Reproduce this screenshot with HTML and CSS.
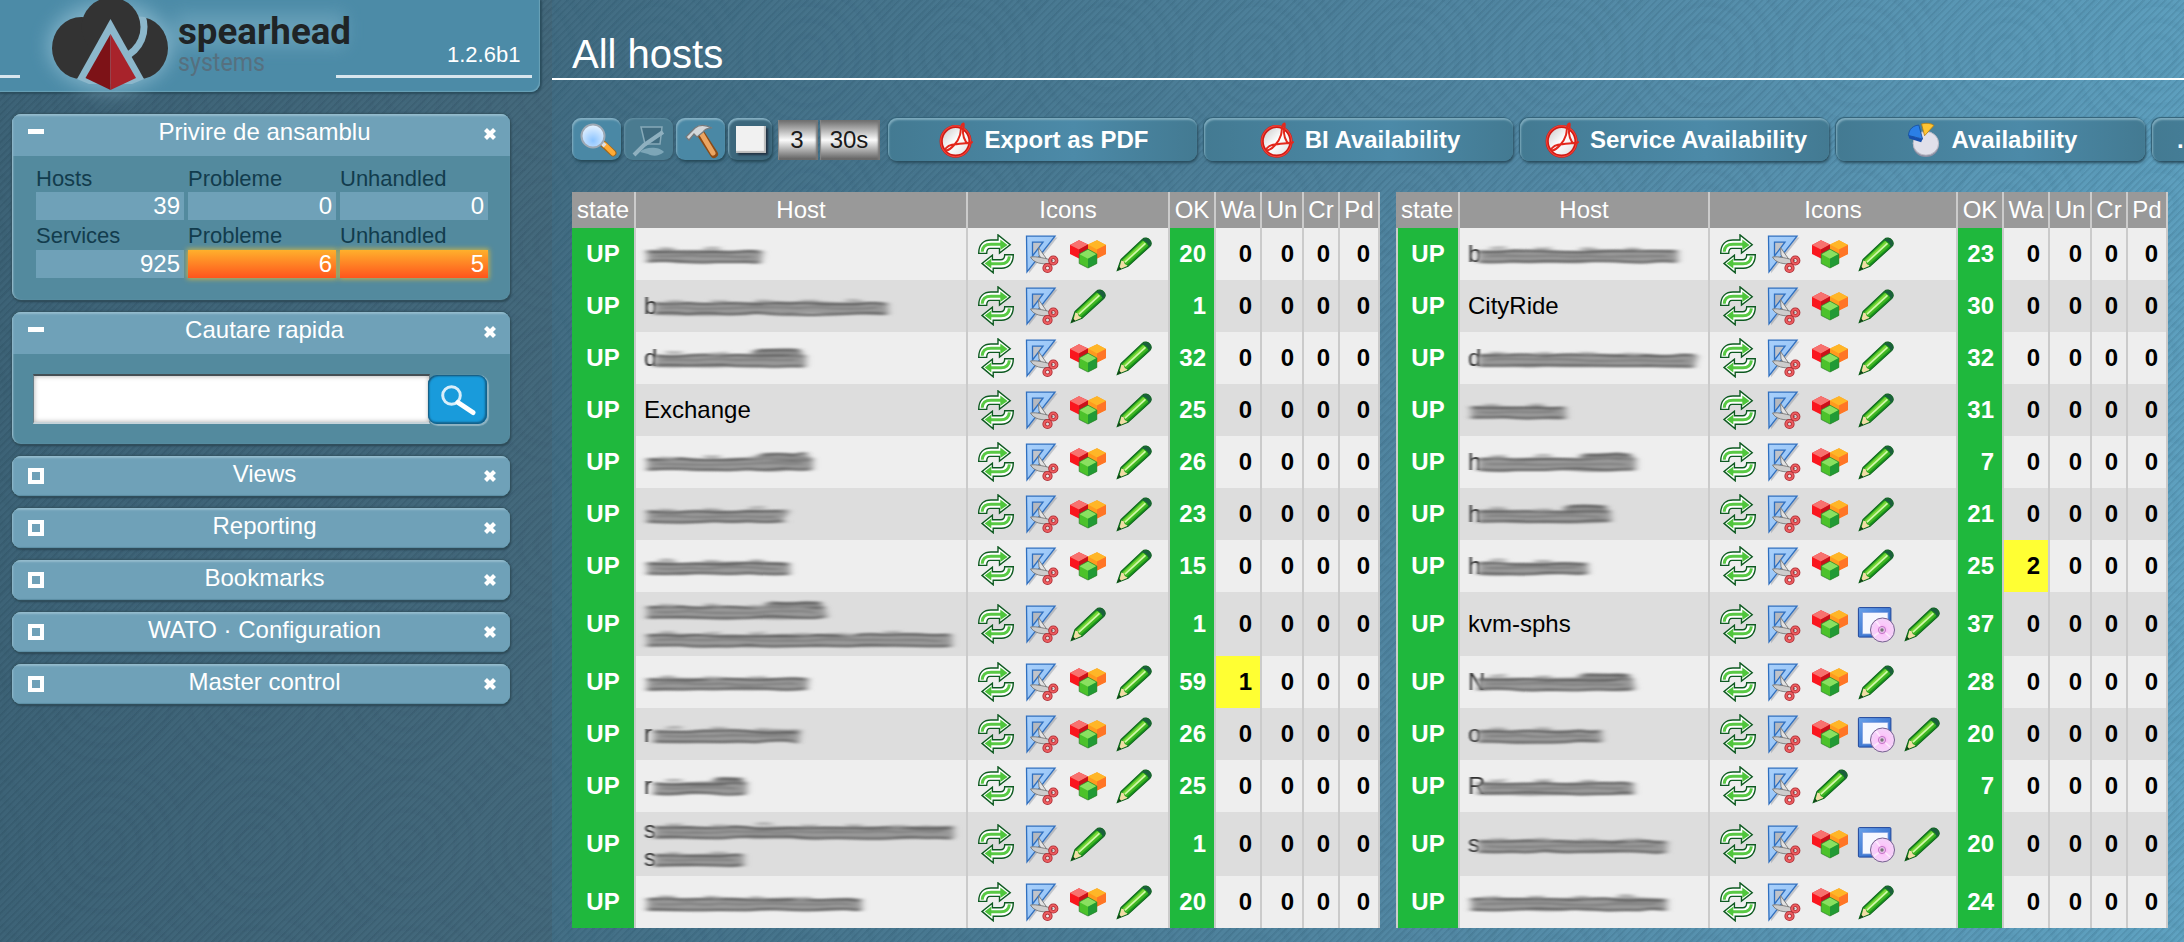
FILE: index.html
```html
<!DOCTYPE html>
<html lang="ro">
<head>
<meta charset="utf-8">
<title>All hosts</title>
<link rel="stylesheet" href="styles.css">
</head>
<body>
<svg class="defs" width="0" height="0" aria-hidden="true">
  <defs>
    <linearGradient id="gBlue" x1="0" y1="0" x2="1" y2="1"><stop offset="0" stop-color="#a9d0fb"/><stop offset=".5" stop-color="#9cc8f8"/><stop offset="1" stop-color="#e8f3ff"/></linearGradient>
    <linearGradient id="gWin" x1="0" y1="0" x2="1" y2="1"><stop offset="0" stop-color="#6aa2ea"/><stop offset="1" stop-color="#1f5ac0"/></linearGradient>
    <radialGradient id="gDisc"><stop offset="0" stop-color="#f6a8f2"/><stop offset=".5" stop-color="#fbc8fa"/><stop offset="1" stop-color="#f3d3f8"/></radialGradient>
    <radialGradient id="gLens" cx=".5" cy=".7" r=".7"><stop offset="0" stop-color="#8cc4ff"/><stop offset="1" stop-color="#e9f4ff"/></radialGradient>
    <linearGradient id="gPdf" x1="0" y1="0" x2="1" y2="1"><stop offset="0" stop-color="#c4c4c4"/><stop offset=".5" stop-color="#fff"/><stop offset="1" stop-color="#ddd"/></linearGradient>
    <filter id="halo" x="-40%" y="-40%" width="180%" height="180%"><feGaussianBlur stdDeviation="9"/></filter>
    <filter id="smear" x="-10%" y="-60%" width="120%" height="220%"><feGaussianBlur stdDeviation="3.6 .9"/></filter>
    <filter id="soft" x="-20%" y="-20%" width="140%" height="140%"><feGaussianBlur stdDeviation="1.1 .5"/></filter>
    <clipPath id="rightLobe"><ellipse cx="139" cy="48" rx="29.500" ry="31.500"/></clipPath>
  </defs>
  <symbol id="i-refresh" viewBox="0 0 40 40">
    <g stroke="#0d5a20" stroke-width="1.4" stroke-linejoin="miter" fill="#fff">
      <path d="M2.7 19.4 C2.7 10 8 6 15 6 H22 V.9 L34.2 10.8 L23.5 19 V14.4 H14 C11.5 14.4 10.7 16.5 10.7 19.4 Z"/>
      <path d="M37.3 20.7 C37.3 30 32 34.2 25.5 34.2 H17.2 V38.8 L6 29.4 L16.4 21.2 V25.8 H24.5 C27.5 25.8 28.7 24 28.7 20.7 Z"/>
    </g>
    <g fill="none" stroke="#58c944" stroke-width="3"><path d="M6.2 17.8 C6.5 11.5 10 10.3 15 10.3 H27"/><path d="M33.4 22.4 C32.8 28 30 29.8 25 29.8 H13"/></g>
    <g fill="#4fc63c"><path d="M24.3 5.5 31.6 10.9 24.3 16Z"/><path d="M15.3 24.6 8.6 29.5 15.3 34.6Z"/></g>
  </symbol>
  <symbol id="i-tools" viewBox="0 0 40 40">
    <path d="M4.9 2.6H34L5.6 38.4Z" fill="#6d7686" opacity=".35" transform="translate(1.5 .8)"/>
    <path fill-rule="evenodd" d="M4.5 2.2H33L5 37.8Z M10.5 8.2V22L21 8.2Z" fill="url(#gBlue)" stroke="#2f6fbf" stroke-width="1.3"/>
    <path d="M16.500 13.500 27.500 29 24 31.500 17 21Z" fill="#e2e2e2" stroke="#777" stroke-width=".9"/>
    <path d="M8.500 23 C14 22 24 24.500 31 26.500 L27.500 30 C20 30 12 29.500 8.500 23Z" fill="#cdcdcd" stroke="#777" stroke-width=".9"/>
    <g fill="none" stroke="#a92930" stroke-width="3.6"><circle cx="31.300" cy="26.500" r="3.300"/><circle cx="25.500" cy="34" r="3.300"/></g>
    <g fill="none" stroke="#ec5d60" stroke-width="2"><circle cx="31.300" cy="26.500" r="3.300"/><circle cx="25.500" cy="34" r="3.300"/></g>
  </symbol>
  <symbol id="i-cubes" viewBox="0 0 40 40">
    <path d="M2 11 11 6.2 20 10.5 20 20 11 24.5 2 20Z" fill="#fa161e"/><path d="M2 11 11 6.2 20 10.5 11 15.5Z" fill="#f7726f"/><path d="M11 15.5 20 10.5V20L11 24.5Z" fill="#c9121a"/>
    <path d="M20 10.5 29 6.2 38 11V20L29 24.5 20 20Z" fill="#ff9a1e"/><path d="M20 10.5 29 6.2 38 11 29 15.5Z" fill="#ffb627"/><path d="M29 15.5 38 11V20L29 24.5Z" fill="#ff7526"/>
    <path d="M11.2 20 20 15.2 28.8 20V29.5L20 34 11.2 29.5Z" fill="#4cc22b"/><path d="M11.2 20 20 15.2 28.8 20 20 24.7Z" fill="#8ae060"/><path d="M20 24.7 28.8 20V29.5L20 34Z" fill="#219a35"/>
    <path d="M11.2 20 20 15.2 28.8 20V29.5L20 34 11.2 29.5Z" fill="none" stroke="#2a7f2a" stroke-width=".7"/>
  </symbol>
  <symbol id="i-pencil" viewBox="0 0 40 40">
    <path d="M3.200 36.600 7 25.500 28.600 5.200C30.500 3.200 34 4 36 6.400 37.600 8.400 37.600 10.500 35.900 12.300L14 32.300Z" fill="#17961a" stroke="#0d641a" stroke-width="1.1"/>
    <path d="M8.200 25.800 28.800 6.600 34.200 11.400 12.600 30.800Z" fill="#3fb524"/>
    <path d="M9 26.400 29.500 7.300 32.400 9.800 11.200 29Z" fill="#7bd838"/>
    <path d="M11 28.200 31.400 9.300" stroke="#d0f7ac" stroke-width="1.600" fill="none"/>
    <path d="M7.400 26.400 9.700 27.200 10.800 30 13.400 31.400 13.200 32.100 5 35.600Z" fill="#f1dda6"/>
    <path d="M3.600 36.400 5 32.400 7.400 34.700Z" fill="#123d18"/>
    <path d="M29.500 4.800C31.500 3.600 34.200 4.400 36 6.600 37.400 8.600 37.400 10.700 35.900 12.300L34.600 13.400C35 10.600 31.800 7 28 6.300Z" fill="#1b5f3d"/>
  </symbol>
  <symbol id="i-disc" viewBox="0 0 40 40">
    <rect x="2.4" y="3.6" width="32.5" height="29.5" rx="1" fill="url(#gWin)" stroke="#20469a" stroke-width="1"/>
    <rect x="6.4" y="8.4" width="25.6" height="21.6" fill="#f6f8ff" stroke="#7d9fe0" stroke-width=".8"/>
    <circle cx="26.5" cy="26" r="12" fill="url(#gDisc)" stroke="#75608f" stroke-width="1"/>
    <path d="M26.5 26 20 17M26.5 26 34 33M26.5 26 18 32" stroke="#fff" stroke-width="1.6" opacity=".6"/>
    <circle cx="26" cy="26" r="3.6" fill="#e9c0ec" stroke="#c26ac4" stroke-width=".9"/><circle cx="26" cy="26" r="1.7" fill="#777"/>
  </symbol>
  <symbol id="i-pdf" viewBox="0 0 34 36">
    <ellipse cx="16.600" cy="19.300" rx="14.400" ry="14.800" fill="url(#gPdf)" stroke="#d01a14" stroke-width="3.200"/>
    <ellipse cx="16.600" cy="19.300" rx="14.900" ry="15.400" fill="none" stroke="#f2443a" stroke-width="1.100"/>
    <path d="M24.500 1.500C21 1.500 22.500 8 21 13C19 20 12 27.500 7.500 28.500C4.500 28 8 24 13 22.800C19 21.500 26 21.500 32.500 20.500C28 24.500 24.500 17 24 11C23.700 7 25.500 2 24.500 1.500Z" fill="none" stroke="#e3281c" stroke-width="2"/>
  </symbol>
  <symbol id="i-pie" viewBox="0 0 36 38">
    <ellipse cx="20" cy="25" rx="13.500" ry="12" fill="#8f90a4"/>
    <ellipse cx="20" cy="22.500" rx="13.500" ry="12.500" fill="#e0e0ea" stroke="#b7b8c4"/>
    <path d="M16.500 18 1.500 14.200C2 7 7 3.600 12.500 3.200Z" fill="#2b7fe6" stroke="#164f9f" stroke-width=".9"/><path d="M1.500 14.200 16.500 18 15 21.500 2.400 17.400Z" fill="#164fae"/>
    <path d="M18.600 14.500 15.400 2C20 .8 25.500 1 28.500 3.600Z" fill="#ffc533" stroke="#b87f10" stroke-width=".9"/>
  </symbol>
</svg>

<aside class="sidebar">
  <header class="brand">
    <span class="rule rule-left"></span>
    <svg class="logo" width="320" height="100" viewBox="40 0 320 100">
      <g filter="url(#halo)" fill="#8fbdd2" opacity=".75"><ellipse cx="110" cy="46" rx="62" ry="44"/><rect x="175" y="14" width="170" height="32" opacity=".55"/></g>
      <ellipse cx="139" cy="48" rx="29" ry="31" fill="#333"/>
      <circle cx="111" cy="27" r="36.500" fill="#8cb7cb" clip-path="url(#rightLobe)"/>
      <ellipse cx="81.500" cy="48" rx="29.500" ry="31" fill="#333"/>
      <circle cx="111" cy="27" r="29.500" fill="#333"/>
      <path d="M90 36h36v16l-6 6H90z" fill="#333"/>
      <path d="M110.500 19 144 79 132 84 89 84 77 79Z" fill="#8cb7cb"/>
      <path d="M110.500 34 85.500 78 110.500 90Z" fill="#7d1217"/><path d="M110.500 34 136 78 110.500 90Z" fill="#a8232b"/>
      <text class="logo-main" x="178" y="44" textLength="173" lengthAdjust="spacingAndGlyphs">spearhead</text>
      <text class="logo-sub" x="178" y="70.500" textLength="87" lengthAdjust="spacingAndGlyphs">systems</text>
    </svg>
    <span class="version">1.2.6b1</span>
    <span class="rule rule-right"></span>
  </header>

  <section class="snapin">
    <h2 class="snapin-head"><i class="fold open"></i><span>Privire de ansamblu</span><svg class="close" viewBox="0 0 14 14"><path d="M2.500 2.500 11.500 11.500M11.500 2.500 2.500 11.500"/></svg></h2>
    <div class="snapin-body overview">
      <span class="lbl">Hosts</span><span class="lbl">Probleme</span><span class="lbl">Unhandled</span>
      <b class="val">39</b><b class="val">0</b><b class="val">0</b>
      <span class="lbl second">Services</span><span class="lbl second">Probleme</span><span class="lbl second">Unhandled</span>
      <b class="val">925</b><b class="val hot">6</b><b class="val hot">5</b>
    </div>
  </section>
  <section class="snapin">
    <h2 class="snapin-head"><i class="fold open"></i><span>Cautare rapida</span><svg class="close" viewBox="0 0 14 14"><path d="M2.500 2.500 11.500 11.500M11.500 2.500 2.500 11.500"/></svg></h2>
    <div class="snapin-body search">
      <div class="search-input"></div>
      <div class="search-btn"><svg width="36" height="32" viewBox="0 0 36 32"><circle cx="11.500" cy="10.500" r="8.800" fill="none" stroke="#d9eefa" stroke-width="3"/><path d="M18 17.500 33 27.500" stroke="#fff" stroke-width="5" stroke-linecap="round"/></svg></div>
    </div>
  </section>
  <section class="snapin closed"><h2 class="snapin-head"><i class="fold"></i><span>Views</span><svg class="close" viewBox="0 0 14 14"><path d="M2.500 2.500 11.500 11.500M11.500 2.500 2.500 11.500"/></svg></h2></section>
  <section class="snapin closed"><h2 class="snapin-head"><i class="fold"></i><span>Reporting</span><svg class="close" viewBox="0 0 14 14"><path d="M2.500 2.500 11.500 11.500M11.500 2.500 2.500 11.500"/></svg></h2></section>
  <section class="snapin closed"><h2 class="snapin-head"><i class="fold"></i><span>Bookmarks</span><svg class="close" viewBox="0 0 14 14"><path d="M2.500 2.500 11.500 11.500M11.500 2.500 2.500 11.500"/></svg></h2></section>
  <section class="snapin closed"><h2 class="snapin-head"><i class="fold"></i><span>WATO · Configuration</span><svg class="close" viewBox="0 0 14 14"><path d="M2.500 2.500 11.500 11.500M11.500 2.500 2.500 11.500"/></svg></h2></section>
  <section class="snapin closed"><h2 class="snapin-head"><i class="fold"></i><span>Master control</span><svg class="close" viewBox="0 0 14 14"><path d="M2.500 2.500 11.500 11.500M11.500 2.500 2.500 11.500"/></svg></h2></section>
</aside>

<main class="main">
  <h1 class="title">All hosts</h1>
  <nav class="toolbar">
    <span class="tool"><svg width="50" height="42" viewBox="0 0 50 42"><path d="M30 25 41 35" stroke="#a3671a" stroke-width="7" stroke-linecap="round"/><path d="M33 27 41 35" stroke="#ffab35" stroke-width="5" stroke-linecap="round"/><path d="M28 23 33 28" stroke="#e0e0e0" stroke-width="4"/><circle cx="21" cy="18" r="11.500" fill="url(#gLens)" stroke="#9ea9b5" stroke-width="2"/></svg></span>
    <span class="tool dim"><svg width="50" height="42" viewBox="0 0 50 42"><path d="M17 9H38L36 26H21Z" fill="#416c80" stroke="#86a9b8" stroke-width="1.500"/><path d="M10 37 20 27 39 14" fill="none" stroke="#8fb0bf" stroke-width="4"/><path d="M16 34C22 28 36 29 40 34C34 39 28 38 24 36Z" fill="#7da6b7"/></svg></span>
    <span class="tool"><svg width="50" height="42" viewBox="0 0 50 42"><path d="M25 16 38 36" stroke="#8c4b16" stroke-width="8" stroke-linecap="round"/><path d="M25 15 37 35" stroke="#eba562" stroke-width="5" stroke-linecap="round"/><path d="M10 19 19 10C24 6 30 7 36 10C31 10 28 12 27 14L21 19 18 16 13 22Z" fill="#d4d7d9" stroke="#77797b" stroke-width="1.200"/></svg></span>
    <span class="tool check"><i></i></span>
    <span class="cell three">3</span><span class="cell secs">30s</span>
    <span class="btn"><svg width="34" height="36"><use href="#i-pdf"/></svg>Export as PDF</span>
    <span class="btn"><svg width="34" height="36"><use href="#i-pdf"/></svg>BI Availability</span>
    <span class="btn"><svg width="34" height="36"><use href="#i-pdf"/></svg>Service Availability</span>
    <span class="btn"><svg width="34" height="36"><use href="#i-pie"/></svg>Availability</span>
    <span class="btn more">...</span>
  </nav>
  <table class="hosts">
    <colgroup><col class="c-state"><col class="c-host"><col class="c-icons"><col class="c-n46"><col class="c-n46"><col class="c-n42"><col class="c-n36"><col class="c-n40"><col class="c-gap"><col class="c-state"><col class="c-host2"><col class="c-icons2"><col class="c-n46"><col class="c-n46"><col class="c-n42"><col class="c-n36"><col class="c-n40"></colgroup>
    <thead><tr><th>state</th><th>Host</th><th>Icons</th><th>OK</th><th>Wa</th><th>Un</th><th>Cr</th><th>Pd</th><td class="gap"></td><th>state</th><th>Host</th><th>Icons</th><th>OK</th><th>Wa</th><th>Un</th><th>Cr</th><th>Pd</th></tr></thead>
    <tbody id="rows"></tbody>
  </table>
</main>
<script src="app.js"></script>
</body>
</html>
```
FILE: styles.css
```css
* { box-sizing: border-box; }
html, body { margin: 0; height: 100%; }
body {
  display: flex;
  width: 2184px;
  height: 942px;
  overflow: hidden;
  font: 24px/28px "Liberation Sans", Arial, sans-serif;
  color: #fff;
  background: #44708a;
}
.defs { position: absolute; }

.sidebar, .main { height: 942px; overflow: hidden; }
.sidebar {
  flex: 0 0 552px;
  background:
    repeating-linear-gradient(135deg, rgba(10,35,50,.1) 0 1.4px, transparent 2.6px 5px),
    repeating-radial-gradient(circle at 50% 50%, rgba(20,50,65,.035) 0 4px, transparent 8px 16px) 30px 20px / 150px 150px,
    linear-gradient(90deg, #3d6377, #44697c);
}
.main {
  flex: 1;
  background:
    repeating-linear-gradient(135deg, rgba(10,45,65,.1) 0 1.4px, transparent 2.6px 5px),
    repeating-radial-gradient(circle at 50% 50%, rgba(20,60,85,.04) 0 4px, transparent 8px 16px) 30px -20px / 150px 150px,
    linear-gradient(97deg, #426c82 0%, #4a7b94 32%, #5389a5 58%, #5fa2c1 100%);
}

/* sidebar header */
.brand {
  position: relative;
  display: flex;
  width: 540px;
  height: 92px;
  margin-bottom: 22px;
  padding-left: 40px;
  background: #4c8ba7;
  border-bottom-right-radius: 9px;
  box-shadow: 1px 1px 2px 1px #2b4d5d, inset -1px -1px 1px #6ba2b9;
}
.logo { flex: none; overflow: visible; }
.logo-main { font: 700 37px Roboto, sans-serif; fill: #1f2426; }
.logo-sub { font: 400 26px Roboto, sans-serif; fill: #56707f; }
.version { margin: 41px 0 0 87px; font-size: 22px; white-space: nowrap; }
.rule { position: absolute; top: 75px; height: 3px; background: #d8e6ee; }
.rule-left { left: 0; width: 20px; }
.rule-right { left: 336px; width: 196px; }

/* snap-ins */
.snapin {
  width: 498px;
  margin: 0 0 12px 12px;
  border-radius: 9px;
  background: #538a9e;
  box-shadow: 0 0 2px 1px #33525f, 1px 2px 2px #2a4653, inset 1px 1px 2px #a3c5d4;
  overflow: hidden;
}
.snapin-head {
  display: flex;
  justify-content: space-between;
  height: 42px;
  margin: 0;
  padding: 4px 13px 0 16px;
  font-size: 24px;
  font-weight: 400;
  background: #6fa1b8;
  box-shadow: inset 1px 2px 2px #94bccd;
}
.snapin-head span { padding-left: 2px; }
.closed .snapin-head { height: 40px; box-shadow: inset 1px 2px 2px #94bccd, inset 0 -1px 1px #5b8da3; }
.fold { width: 16px; height: 16px; margin-top: 8px; border: 4px solid #fff; }
.fold.open { height: 5px; margin-top: 11px; border: 0; background: #fff; }
.close { width: 14px; height: 14px; margin-top: 9px; fill: none; stroke: #fff; stroke-width: 4.2; }
.overview {
  display: grid;
  grid-template-columns: 148px 148px 148px;
  column-gap: 4px;
  grid-template-rows: 36px 28px 30px 28px;
  height: 144px;
  padding-left: 24px;
}
.lbl { padding-top: 9px; font-size: 22px; color: #123c4d; }
.lbl.second { padding-top: 2px; }
.val { font-weight: 400; text-align: right; padding-right: 4px; background: #6fa1b8; line-height: 27px; }
.hot { background: linear-gradient(#ffb02c, #ff541d); box-shadow: 0 0 5px 1px #c7b34b; }
.search { display: flex; height: 90px; padding: 20px 0 0 21px; }
.search-input { width: 397px; height: 50px; background: #fff; border: 1px solid #687f89; border-top: 2px solid #454f54; border-bottom: 2px solid #c6d3d9; box-shadow: inset 0 0 5px #aaa; }
.search-btn {
  width: 59px;
  height: 49px;
  margin: 1px 0 0 -2px;
  padding: 10px 0 0 12px;
  background: #199bdb;
  border-radius: 9px;
  box-shadow: 1px 1px 1px 1px #8fb4c3, inset -1px -1px 2px 1px #125f88, inset 1px 1px 2px #1b4e6c;
}

/* content */
.title { height: 80px; margin: 0; padding: 31px 0 0 20px; font-size: 40px; line-height: 46px; font-weight: 400; border-bottom: 2px solid #fff; }
.toolbar { display: flex; width: 1800px; height: 42px; margin: 38px 0 0 20px; }
.tool { flex: none; width: 49px; margin-right: 3px; border-radius: 9px; background: #4a88a5; box-shadow: 1px 2px 3px #244756, inset 1px 2px 2px #86b0c3; }
.tool svg { display: block; }
.dim { background: #4a7b90; box-shadow: 1px 1px 2px #35596a, inset 1px 1px 2px #648fa2; }
.check { width: 44px; padding: 8px 0 0 8px; background: #3c677c; margin-right: 6px; }
.check i { display: block; width: 30px; height: 27px; background: #f1f1f1; box-shadow: inset -2px -2px 1px #bbb, 2px 2px 2px #234; }
.cell { flex: none; height: 40px; margin-top: 2px; text-align: center; line-height: 39px; color: #1a1a1a; background: linear-gradient(#6a6a6a, #fbfbfb 50%, #5e5e5e); box-shadow: inset -2px 0 2px #777, inset 1px 0 1px #888; }
.three { width: 40px; margin-right: 2px; padding-right: 2px; }
.secs { width: 60px; margin-right: 8px; padding-right: 2px; }
.btn {
  flex: none;
  display: flex;
  align-items: center;
  justify-content: center;
  gap: 11px;
  width: 309px;
  height: 43px;
  margin-right: 7px;
  padding-left: 3px;
  border-radius: 9px;
  font-weight: 700;
  background: linear-gradient(90deg, #437a92, #4c8aa8 60%, #437a92);
  box-shadow: 1px 2px 3px #284b5b, -1px -1px 1px #35647a, inset 1px 2px 2px #7eabbd;
}
.more { justify-content: flex-start; padding-left: 25px; }

.hosts { width: 1596px; margin: 32px 0 0 20px; table-layout: fixed; border-collapse: separate; border-spacing: 0; }
.c-state { width: 64px; } .c-host { width: 332px; } .c-icons { width: 202px; }
.c-host2 { width: 250px; } .c-icons2 { width: 248px; } .c-gap { width: 16px; }
.c-n46 { width: 46px; } .c-n42 { width: 42px; } .c-n36 { width: 36px; } .c-n40 { width: 40px; }
.hosts th, .hosts td { padding: 0; border-right: 2px solid #cbcbcb; }
.hosts th { height: 36px; font-weight: 400; background: #999; }
.hosts tbody td { height: 52px; background: #eee; color: #000; }
.hosts tbody tr:nth-child(even) td { background: #ddd; }
.hosts tbody tr.tall td { height: 64px; }
.hosts tbody tr td.state { font-weight: 700; text-align: center; color: #fff; }
.hosts td.right-edge { border-left: 2px solid #cbcbcb; }
.hosts td.num { padding: 0 8px 0 0; font-weight: 700; text-align: right; }
.hosts tbody tr td.ok { color: #fff; }
.hosts tbody tr:nth-child(n) td.state, .hosts tbody tr:nth-child(n) td.ok { background: #1fb83d; }
.hosts tbody tr:nth-child(n) td.warn { background: #ff3; }
.hosts td.host { padding-left: 8px; }
.hosts thead td.gap, .hosts tbody tr:nth-child(n) td.gap { background: none; border: 0; }
.icons { display: flex; gap: 6px; padding-left: 8px; }
.icons svg { width: 40px; height: 40px; flex: none; }
.smudge { display: block; overflow: visible; }
.smudge text { font: 24px "Liberation Sans", Arial, sans-serif; }
```
FILE: app.js
```js
// Hidden names are [lead letter, width, raised end] strokes; plain strings are shown.
// Icon codes: r refresh, t tools, c cubes, d disc, p pencil.
const ICONS = { r: 'refresh', t: 'tools', c: 'cubes', d: 'disc', p: 'pencil' };
const ROWS = [
  [[[['', 122]], 'rtcp', 20, 0], [[['b', 214]], 'rtcp', 23, 0]],
  [[[['b', 248]], 'rtp', 1, 0], ['CityRide', 'rtcp', 30, 0]],
  [[[['d', 166, 1]], 'rtcp', 32, 0], [[['d', 232]], 'rtcp', 32, 0]],
  [['Exchange', 'rtcp', 25, 0], [[['', 102]], 'rtcp', 31, 0]],
  [[[['', 173, 1]], 'rtcp', 26, 0], [[['h', 172, 1]], 'rtcp', 7, 0]],
  [[[['', 146]], 'rtcp', 23, 0], [[['h', 147, 1]], 'rtcp', 21, 0]],
  [[[['', 150]], 'rtcp', 15, 0], [[['h', 124]], 'rtcp', 25, 2]],
  [[[['', 186, 1], ['', 312]], 'rtp', 1, 0], ['kvm-sphs', 'rtcdp', 37, 0]],
  [[[['', 168]], 'rtcp', 59, 1], [[['N', 170, 1]], 'rtcp', 28, 0]],
  [[[['r', 160]], 'rtcp', 26, 0], [[['o', 138]], 'rtcdp', 20, 0]],
  [[[['r', 107, 1]], 'rtcp', 25, 0], [[['R', 170]], 'rtp', 7, 0]],
  [[[['s', 314], ['s', 104]], 'rtp', 1, 0], [[['s', 203]], 'rtcdp', 20, 0]],
  [[[['', 222]], 'rtcp', 20, 0], [[['', 203]], 'rtcp', 24, 0]],
];

let seed = 7;
const rnd = () => (seed = (seed * 16807) % 2147483647) / 2147483647;

function stroke(x0, x1, y, color, width) {
  let d = `M${x0} ${y}`;
  const step = 34;
  for (let x = x0; x < x1 - 1; x += step) {
    const nx = Math.min(x + step, x1);
    d += `Q${(x + nx) / 2} ${(y + rnd() * 4 - 2).toFixed(1)} ${nx} ${(y + rnd() * 2 - 1).toFixed(1)}`;
  }
  return `<path d="${d}" fill="none" stroke="${color}" stroke-width="${width}"/>`;
}

function smudge([lead, w, raised], height) {
  const x = lead ? 10 : 3;
  let s = stroke(x, w - 4, 16.5, '#999', 12);
  s += stroke(x, w - 6, 11.5, '#4c4c4c', 2);
  s += stroke(x + 8, w - 14, 16, '#777', 1.6);
  s += stroke(x, w - 6, 21.5, '#555', 2);
  for (let p = x + 12; p < w - 30; p += 45) s += stroke(p, p + 16, 8 + rnd() * 2, '#aaa', 2.4);
  if (raised) s += stroke(w * 0.65, w - 8, 9, '#8a8a8a', 5) + stroke(w * 0.68, w - 10, 6.5, '#4a4a4a', 2);
  const letter = lead ? `<text x="0" y="22" filter="url(#soft)" fill="#333">${lead}</text>` : '';
  return `<svg class="smudge" width="${w}" height="${height}">${letter}<g filter="url(#smear)">${s}</g></svg>`;
}

function cells([host, icons, ok, warn], right) {
  const name = typeof host === 'string' ? host : host.map((h) => smudge(h, 28)).join('');
  const pics = [...icons].map((c) => `<svg><use href="#i-${ICONS[c]}"/></svg>`).join('');
  return `<td class="state${right ? ' right-edge' : ''}">UP</td><td class="host">${name}</td>` +
    `<td><div class="icons">${pics}</div></td><td class="num ok">${ok}</td>` +
    `<td class="num${warn ? ' warn' : ''}">${warn}</td><td class="num">0</td><td class="num">0</td><td class="num">0</td>`;
}

document.getElementById('rows').innerHTML = ROWS.map(([a, b], i) =>
  `<tr class="${i === 7 || i === 11 ? 'tall' : ''}">${cells(a, false)}<td class="gap"></td>${cells(b, true)}</tr>`).join('');
```
